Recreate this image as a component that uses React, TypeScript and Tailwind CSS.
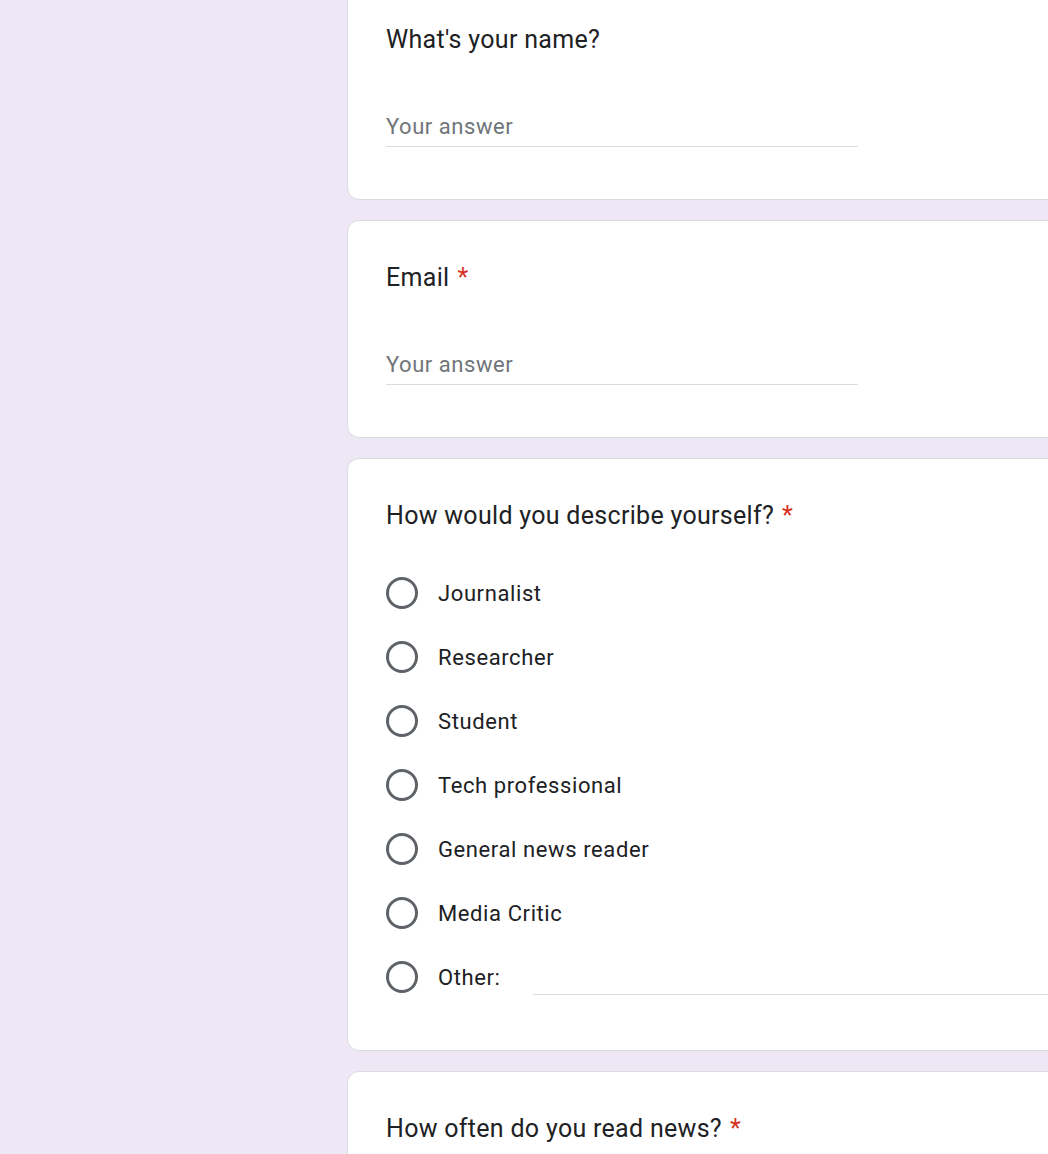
import React from "react";

function Req() {
  return <span className="text-[#d93025] ml-[8px]">*</span>;
}

function Radio() {
  return <div className="w-[32px] h-[32px] rounded-full border-[3px] border-[#5f6368] shrink-0" />;
}

function Title({ children }: { children: React.ReactNode }) {
  return (
    <div className="h-[36px] leading-[36px] text-[25px] text-[#202124] tracking-[0.3px]">{children}</div>
  );
}

function TextCard({ title, required }: { title: string; required?: boolean }) {
  return (
    <div className="w-[960px] h-[218px] bg-white border border-[#dadce0] rounded-[12px] px-[38px] pt-[39px]">
      <Title>
        {title}
        {required && <Req />}
      </Title>
      <div className="mt-[53px] w-[472px] border-b border-[#dadce0] pb-[4px]">
        <div className="h-[31px] leading-[32px] text-[22px] text-[#70757a] tracking-[0.55px]">Your answer</div>
      </div>
    </div>
  );
}

const options = [
  "Journalist",
  "Researcher",
  "Student",
  "Tech professional",
  "General news reader",
  "Media Critic",
];

export default function App() {
  return (
    <div className="w-full h-[1154px] overflow-hidden bg-[#ede7f6] font-['Roboto',sans-serif]">
      <div className="pl-[347px] -mt-[18px] flex flex-col gap-[20px]">
        <TextCard title="What's your name?" />
        <TextCard title="Email" required />
        <div className="w-[960px] h-[593px] bg-white border border-[#dadce0] rounded-[12px] px-[38px] pt-[39px]">
          <Title>
            How would you describe yourself?
            <Req />
          </Title>
          <div className="mt-[27px] flex flex-col">
            {options.map((o) => (
              <div key={o} className="h-[64px] flex items-center">
                <Radio />
                <span className="ml-[20px] text-[22px] text-[#202124] tracking-[0.6px]">{o}</span>
              </div>
            ))}
            <div className="h-[64px] flex items-center">
              <Radio />
              <span className="ml-[20px] text-[22px] text-[#202124] tracking-[0.6px]">Other:</span>
              <div className="ml-[32px] flex-1 self-stretch relative">
                <div className="absolute left-0 right-0 top-[49px] border-b border-[#dadce0]" />
              </div>
            </div>
          </div>
        </div>
        <div className="w-[960px] h-[300px] bg-white border border-[#dadce0] rounded-[12px] px-[38px] pt-[39px]">
          <Title>
            How often do you read news?
            <Req />
          </Title>
        </div>
      </div>
    </div>
  );
}
